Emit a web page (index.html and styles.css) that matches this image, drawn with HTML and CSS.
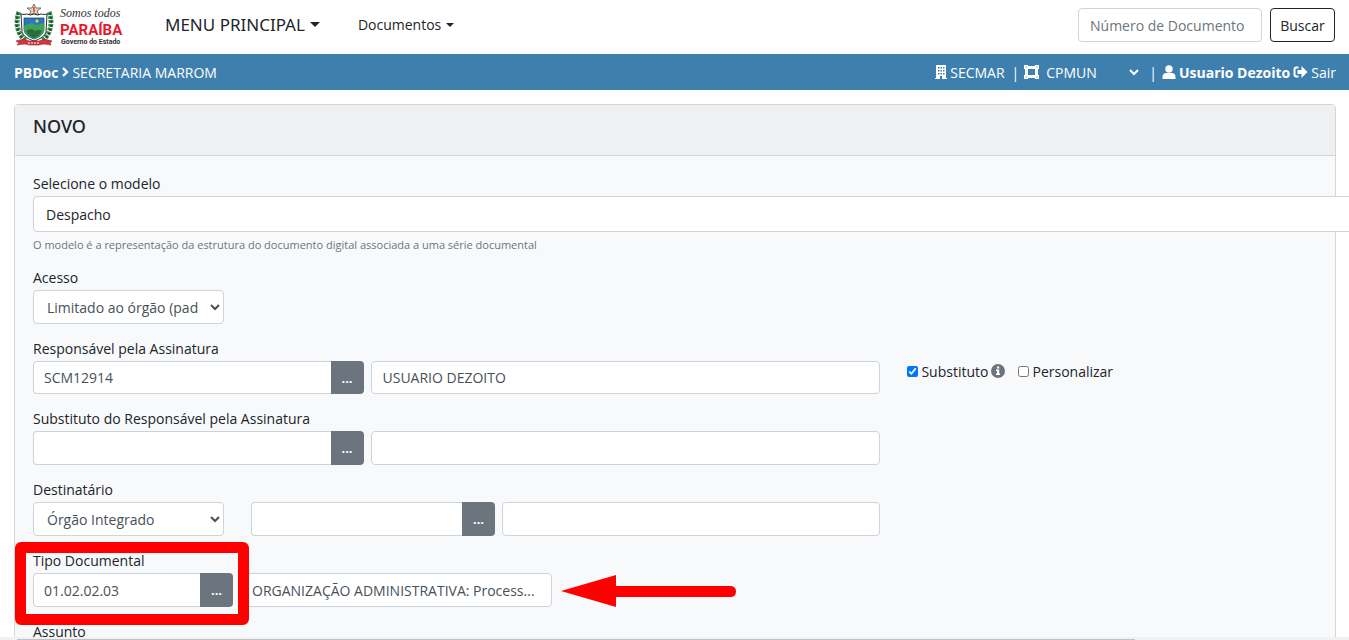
FILE: index.html
```html
<!DOCTYPE html>
<html lang="pt-BR">
<head>
    <meta charset="UTF-8">
    <meta name="viewport" content="width=device-width, initial-scale=1.0">
    <title>PBDoc - Novo documento</title>
    <link rel="stylesheet" href="styles.css">
</head>
<body>

    <!-- Top menu -->
    <header class="navbar">
        <a href="#" class="brand" aria-label="Paraíba">
            <svg width="114" height="46" viewBox="0 0 114 46">
                <!-- Coat of arms -->
                <g stroke="#3f8f55" stroke-width="5" fill="none" stroke-dasharray="3 1">
                    <path d="M5 10 C1 20 3 32 12 39"/>
                    <path d="M35 10 C39 20 37 32 28 39"/>
                </g>
                <g stroke="#1d4a2c" stroke-width="2" fill="none" stroke-dasharray="2 2">
                    <path d="M4 11 C1 21 3 31 10 38"/>
                    <path d="M36 11 C39 21 37 31 30 38"/>
                </g>
                <path d="M20 2l2 4 5 0-4 3 2 4-5-2-5 2 2-4-4-3 5 0z" fill="#e8d9c0" stroke="#555" stroke-width=".8"/>
                <path d="M20 5v5" stroke="#d33" stroke-width="1.5"/>
                <path d="M7 12q3 1 6 0 3 2 7 0 4 2 7 0 3 1 6 0l-1 18q-2 6-12 9-10-3-12-9z" fill="#fff" stroke="#333" stroke-width="1"/>
                <path d="M10 16h20v12q-1 6-10 9-9-3-10-9z" fill="#2878bd" stroke="#174c74" stroke-width=".8"/>
                <path d="M10 24l7-3 5 2 8-2v8q-2 6-10 8-9-3-10-9z" fill="#3fa357"/>
                <path d="M12 29q5-4 9 0 4-2 7 0-2 5-8 7-6-2-8-7z" fill="#2b6b3c"/>
                <circle cx="23" cy="19" r="1.500" fill="#f2d64a"/>
                <path d="M2 39q9-3 13 0h10q6-3 13 0l-2 2 1 2q-8-2-12 0h-9q-5-2-13 0l2-2z" fill="#d8323a" stroke="#8d1f26" stroke-width=".6"/>
                <path d="M14 41h12" stroke="#fff" stroke-width="1" stroke-dasharray="2 1"/>
                <!-- Wordmark -->
                <text x="46" y="15" class="logo-script">Somos todos</text>
                <text x="46" y="33" class="logo-name">PARAÍBA</text>
                <text x="47" y="42" class="logo-sub">Governo do Estado</text>
            </svg>
        </a>
        <nav class="menu">
            <a href="#" class="menu-main">MENU PRINCIPAL<span class="caret"></span></a>
            <a href="#" class="menu-item">Documentos<span class="caret"></span></a>
        </nav>
        <form class="search">
            <input type="text" class="form-control" placeholder="Número de Documento" aria-label="Número de Documento">
            <button type="button" class="btn-search">Buscar</button>
        </form>
    </header>

    <!-- Blue bar with location and user -->
    <div class="info-bar">
        <div class="crumbs">
            <b>PBDoc</b>
            <svg width="8" height="10" viewBox="0 0 8 10"><path d="M2 1l4 4-4 4" fill="none" stroke="#fff" stroke-width="2.4"/></svg>
            <span>SECRETARIA MARROM</span>
        </div>
        <div class="user-info">
            <svg width="12" height="14" viewBox="0 0 12 14"><path fill="#fff" fill-rule="evenodd" d="M1 0h10v13h1v1H7v-3H5v3H0v-1h1zM3 2v1.500h1.500V2zM5.500 2v1.500H7V2zM8 2v1.500h1.500V2zM3 5v1.500h1.500V5zM5.500 5v1.500H7V5zM8 5v1.500h1.500V5zM3 8v1.500h1.500V8zM5.500 8v1.500H7V8zM8 8v1.500h1.500V8z"/></svg>
            <span>SECMAR</span>
            <span class="sep">|</span>
            <svg width="15" height="14" viewBox="0 0 15 14"><path d="M2.500 2.500h10v9h-10z" fill="none" stroke="#fff" stroke-width="3"/><path fill="#fff" d="M0 0h4v4H0zM11 0h4v4h-4zM0 10h4v4H0zM11 10h4v4h-4z"/><path fill="#3f7fae" d="M1.500 1.500h1v1h-1zM12.500 1.500h1v1h-1zM1.500 11.500h1v1h-1zM12.500 11.500h1v1h-1z"/></svg>
            <select class="unit" aria-label="Lotação"><option>CPMUN</option></select>
            <span class="sep">|</span>
            <svg width="14" height="14" viewBox="0 0 14 14"><circle cx="7" cy="4" r="3.700" fill="#fff"/><path fill="#fff" d="M0.500 14v-2q0-4 4-4h5q4 0 4 4v2z"/></svg>
            <b>Usuario Dezoito</b>
            <a href="#" class="logout">
                <svg width="15" height="12" viewBox="0 0 14 12"><path d="M5 1.500H3Q1 1.500 1 3.500v5Q1 10.500 3 10.500h2" fill="none" stroke="#fff" stroke-width="2"/><path fill="#fff" d="M4 4h4V0l6 6-6 6V8H4z"/></svg>
                Sair
            </a>
        </div>
    </div>

    <main class="card">
        <div class="card-header"><h1>NOVO</h1></div>
        <form class="card-body">
            <div class="form-group">
                <label for="modelo">Selecione o modelo</label>
                <select id="modelo" class="form-control model"><option>Despacho</option></select>
                <small>O modelo é a representação da estrutura do documento digital associada a uma série documental</small>
            </div>

            <div class="form-group">
                <label for="acesso">Acesso</label>
                <select id="acesso" class="form-control short-select"><option>Limitado ao órgão (padrão)</option></select>
            </div>

            <div class="form-group">
                <label for="responsavel">Responsável pela Assinatura</label>
                <div class="fields">
                    <div class="row person">
                        <div class="input-group">
                            <input type="text" id="responsavel" class="form-control" value="SCM12914">
                            <button type="button">...</button>
                        </div>
                        <input type="text" class="form-control" value="USUARIO DEZOITO" aria-label="Nome do responsável" readonly>
                    </div>
                    <div class="checks">
                        <input type="checkbox" id="substituto" checked>
                        <label for="substituto">Substituto</label>
                        <svg width="14" height="14" viewBox="0 0 14 14"><circle cx="7" cy="7" r="7" fill="#6c757d"/><path fill="#fff" d="M6 2.500h2.200v2H6zM5 5.500h3.200v4H9V11H5V9.500h1V7H5z"/></svg>
                        <input type="checkbox" id="personalizar" class="second">
                        <label for="personalizar">Personalizar</label>
                    </div>
                </div>
            </div>

            <div class="form-group">
                <label for="subst-resp">Substituto do Responsável pela Assinatura</label>
                <div class="row person">
                    <div class="input-group">
                        <input type="text" id="subst-resp" class="form-control">
                        <button type="button">...</button>
                    </div>
                    <input type="text" class="form-control" aria-label="Nome do substituto" readonly>
                </div>
            </div>

            <div class="form-group">
                <label for="destinatario">Destinatário</label>
                <div class="row receiver">
                    <select id="destinatario" class="form-control short-select"><option>Órgão Integrado</option></select>
                    <div class="input-group">
                        <input type="text" class="form-control" aria-label="Sigla do destinatário">
                        <button type="button">...</button>
                    </div>
                    <input type="text" class="form-control" aria-label="Nome do destinatário" readonly>
                </div>
            </div>

            <div class="form-group doc-type">
                <label for="tipo">Tipo Documental</label>
                <div class="row">
                    <div class="input-group">
                        <input type="text" id="tipo" class="form-control" value="01.02.02.03">
                        <button type="button">...</button>
                    </div>
                    <input type="text" class="form-control description" value="ORGANIZAÇÃO ADMINISTRATIVA: Process..." aria-label="Descrição do tipo" readonly>
                    <svg class="arrow" width="175" height="32" viewBox="0 0 175 32"><path fill="#f00" d="M0 16L55 0v11h114q6 0 6 5.500t-6 5.500H55v10z"/></svg>
                </div>
                <div class="highlight"></div>
            </div>

            <div class="form-group">
                <label for="assunto">Assunto</label>
                <input type="text" id="assunto" class="form-control">
            </div>
        </form>
    </main>

    <div class="scrollbar"><div class="thumb"></div></div>

</body>
</html>
```
FILE: styles.css
```css
* {
    box-sizing: border-box;
}

body {
    margin: 0;
    height: 100vh;
    overflow: hidden;
    background: white;
    color: #212529;
    font-family: "Open Sans", "Noto Sans", sans-serif;
    font-size: 14px;
    line-height: 21px;
}

a {
    color: inherit;
    text-decoration: none;
}

input, select, button {
    font-family: inherit;
    font-size: inherit;
}

/* top menu */
.navbar {
    display: flex;
    align-items: center;
    height: 54px;
    padding: 0 14px 4px;
}

.brand {
    display: flex;
    width: 151px;
}

.logo-script {
    font: italic 12px "Liberation Serif", serif;
    fill: #333;
}

.logo-name {
    font: bold 15px Roboto, sans-serif;
    fill: #e8192c;
}

.logo-sub {
    font: bold 7px Roboto, sans-serif;
    fill: #333;
}

.menu {
    display: flex;
    align-items: center;
    gap: 38px;
    padding-bottom: 2px;
}

.menu-main {
    font-family: "Noto Sans", sans-serif;
    font-size: 17px;
}

.caret {
    display: inline-block;
    margin-left: 5px;
    vertical-align: 4px;
    border-top: 5px solid;
    border-left: 5px solid transparent;
    border-right: 5px solid transparent;
}

.menu-item .caret {
    vertical-align: 3px;
    border-width: 4px 4px 0;
}

.search {
    display: flex;
    gap: 8px;
    margin-left: auto;
}

.search .form-control {
    width: 184px;
}

.btn-search {
    width: 65px;
    height: 34px;
    padding: 0;
    border: 1px solid #212529;
    border-radius: 4px;
    background: white;
    color: #212529;
}

/* blue bar */
.info-bar {
    display: flex;
    justify-content: space-between;
    height: 36px;
    padding: 0 13px 0 14px;
    background: #3f7fae;
    color: white;
}

.crumbs, .user-info, .logout {
    display: flex;
    align-items: center;
    gap: 3px;
}

.sep {
    margin: 0 2px 0 4px;
}

.unit {
    width: 100px;
    padding: 0;
    border: 0;
    background: transparent;
    color: white;
}

/* card */
.card {
    margin: 14px 13px 0 14px;
    border: 1px solid #d5d6d8;
    border-radius: 4px;
    background: #f8f9fb;
}

.card-header {
    height: 51px;
    padding: 11px 18px;
    border-bottom: 1px solid #d5d6d8;
    background: #eff0f2;
}

.card-header h1 {
    margin: 0;
    font-family: "Noto Sans", sans-serif;
    font-size: 18px;
    font-weight: 500;
    line-height: 21px;
}

.card-body {
    padding: 19px 18px;
}

.form-group {
    margin-bottom: 16px;
}

.form-group > label {
    display: block;
    padding-bottom: 3px;
    line-height: 18px;
}

.form-group small {
    display: block;
    margin-top: 4px;
    font-size: 11px;
    line-height: 17px;
    color: #6c757d;
}

.form-control {
    display: block;
    width: 100%;
    height: 34px;
    padding: 0 11px;
    border: 1px solid #ced4da;
    border-radius: 4px;
    background: white;
    color: #495057;
}

.form-control::placeholder {
    color: #6c757d;
    opacity: 1;
}

.model {
    width: 110%;
    height: 36px;
    padding: 0 8px;
    color: #212529;
}

/* the text stops a bit before the drop-down arrow */
.short-select {
    width: 191px;
    padding: 0 0 0 9px;
}

.short-select option {
    padding-right: 8px;
}

#acesso {
    padding-right: 8px;
    background: linear-gradient(white, white);
}

.fields {
    display: flex;
}

.fields .form-control, .fields .input-group button {
    height: 33px;
}

.row {
    display: flex;
    gap: 7px;
    width: 66%;
}

.person .input-group {
    flex: 0 0 39%;
}

.input-group {
    display: flex;
}

.input-group .form-control {
    flex: 1;
    min-width: 0;
    border-right: 0;
    border-radius: 4px 0 0 4px;
    padding: 0 10px;
}

.input-group button {
    width: 33px;
    height: 34px;
    padding: 0;
    border: 0;
    border-radius: 0 4px 4px 0;
    background: #6c757d;
    color: white;
    font-size: 13px;
    font-weight: bold;
}

.receiver .short-select {
    flex: none;
    margin-right: 20px;
}

.receiver .input-group {
    flex: 0 0 244px;
}

.checks {
    display: flex;
    align-items: center;
    gap: 3px;
    height: 20px;
    margin-left: 27px;
}

.checks input {
    width: 11px;
    height: 11px;
    margin: 0;
}

.checks .second {
    margin-left: 10px;
}

/* document type, marked in red */
.doc-type {
    position: relative;
}

.doc-type .input-group {
    width: 200px;
}

.doc-type .description {
    width: 312px;
}

.highlight {
    position: absolute;
    top: -10px;
    left: -18px;
    width: 234px;
    height: 83px;
    border: 11px solid #f00;
    border-radius: 6px;
}

.arrow {
    margin: 2px 2px 0;
}

.scrollbar {
    position: fixed;
    right: 0;
    bottom: 0;
    left: 0;
    height: 3px;
    padding: 2px 17px 0;
    background: #f1f1f1;
}

.thumb {
    width: 85%;
    height: 1px;
    background: #c1c1c1;
}
```
